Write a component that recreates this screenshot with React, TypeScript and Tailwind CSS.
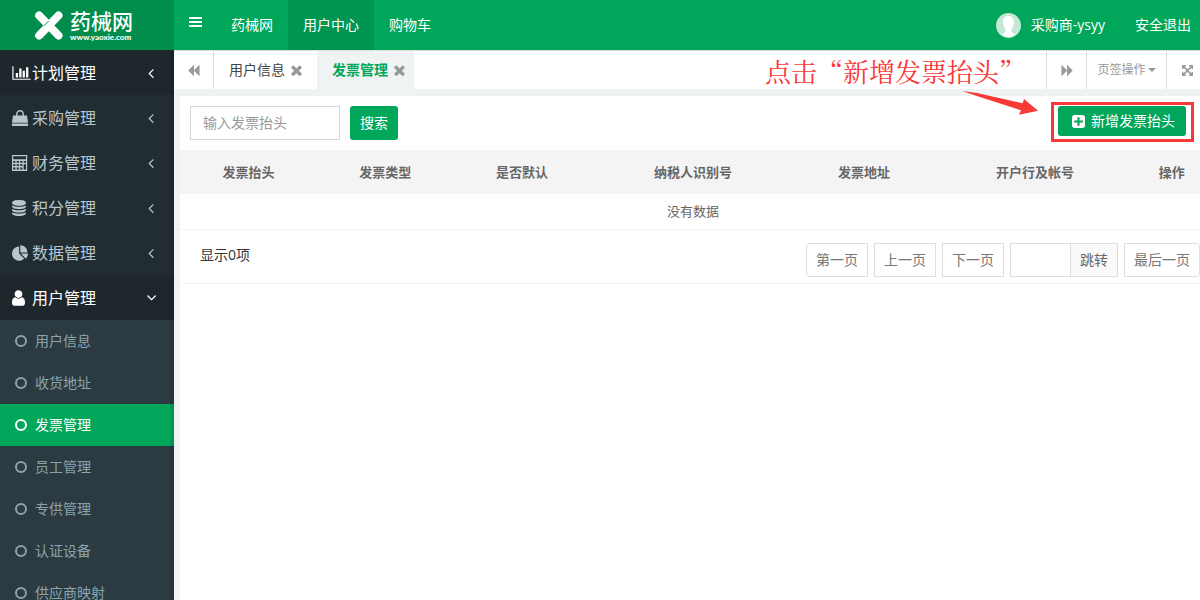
import React from 'react';

type GlyphProps = { d: string; box?: string; className?: string };

function Glyph({ d, box = '0 0 1792 1792', className = 'h-3.5 w-3.5' }: GlyphProps) {
  return (
    <svg viewBox={box} aria-hidden="true" className={`shrink-0 fill-current ${className}`}>
      <path d={d} />
    </svg>
  );
}

const ICONS = {
  backward:
    'M1683 141q19-19 32-13t13 32v1472q0 26-13 32t-32-13l-710-710q-9-9-13-19v710q0 26-13 32t-32-13l-710-710q-19-19-19-45t19-45l710-710q19-19 32-13t13 32v710q4-10 13-19z',
  times:
    'M1490 1322q0 40-28 68l-136 136q-28 28-68 28t-68-28l-294-294-294 294q-28 28-68 28t-68-28l-136-136q-28-28-28-68t28-68l294-294-294-294q-28-28-28-68t28-68l136-136q28-28 68-28t68 28l294 294 294-294q28-28 68-28t68 28l136 136q28 28 28 68t-28 68l-294 294 294 294q28 28 28 68z',
  angle:
    'M1203 544q0 13-10 23l-393 393 393 393q10 10 10 23t-10 23l-50 50q-10 10-23 10t-23-10l-466-466q-10-10-10-23t10-23l466-466q10-10 23-10t23 10l50 50q10 10 10 23z',
  expand:
    'M1411 541l-355 355 355 355 144-144q29-31 70-14 39 17 39 59v448q0 26-19 45t-45 19h-448q-42 0-59-40-17-39 14-69l144-144-355-355-355 355 144 144q31 30 14 69-17 40-59 40h-448q-26 0-45-19t-19-45v-448q0-42 40-59 39-17 69 14l144 144 355-355-355-355-144 144q-19 19-45 19-12 0-24-5-40-17-40-59v-448q0-26 19-45t45-19h448q42 0 59 40 17 39-14 69l-144 144 355 355 355-355-144-144q-31-30-14-69 17-40 59-40h448q26 0 45 19t19 45v448q0 42-39 59-13 5-25 5-26 0-45-19z',
  plusSquare:
    'M1408 960v-128q0-26-19-45t-45-19h-320v-320q0-26-19-45t-45-19h-128q-26 0-45 19t-19 45v320h-320q-26 0-45 19t-19 45v128q0 26 19 45t45 19h320v320q0 26 19 45t45 19h128q26 0 45-19t19-45v-320h320q26 0 45-19t19-45zm256-544v960q0 119-84.5 203.5t-203.5 84.5h-960q-119 0-203.5-84.5t-84.5-203.5v-960q0-119 84.5-203.5t203.5-84.5h960q119 0 203.5 84.5t84.5 203.5z',
  chart:
    'M640 896v512h-256v-512h256zm384-512v1024h-256v-1024h256zm1024 1152v128h-2048v-1536h128v1408h1920zm-640-896v768h-256v-768h256zm384-384v1152h-256v-1152h256z',
  database:
    'M896 768q237 0 443-43t325-127v170q0 69-103 128t-280 93.5-385 34.5-385-34.5-280-93.5-103-128v-170q119 84 325 127t443 43zm0 768q237 0 443-43t325-127v170q0 69-103 128t-280 93.5-385 34.5-385-34.5-280-93.5-103-128v-170q119 84 325 127t443 43zm0-384q237 0 443-43t325-127v170q0 69-103 128t-280 93.5-385 34.5-385-34.5-280-93.5-103-128v-170q119 84 325 127t443 43zm0-1152q208 0 385 34.5t280 93.5 103 128v128q0 69-103 128t-280 93.5-385 34.5-385-34.5-280-93.5-103-128v-128q0-69 103-128t280-93.5 385-34.5z',
  pie: 'M768 890l546 546q-106 108-247.5 168t-298.5 60q-209 0-385.5-103t-279.5-279.5-103-385.5 103-385.5 279.5-279.5 385.5-103v762zm187 6h773q0 157-60 298.5t-168 247.5zm709-128h-768v-768q209 0 385.5 103t279.5 279.5 103 385.5z',
  user: 'M1536 1399q0 109-62.5 187t-150.5 78h-854q-88 0-150.5-78t-62.5-187q0-85 8.5-160.5t31.5-152 58.5-131 94-89 134.5-34.5q131 128 313 128t313-128q76 0 134.5 34.5t94 89 58.5 131 31.5 152 8.5 160.5zm-256-887q0 159-112.5 271.5t-271.5 112.5-271.5-112.5-112.5-271.5 112.5-271.5 271.5-112.5 271.5 112.5 112.5 271.5z',
};

function BagIcon() {
  return (
    <svg viewBox="0 0 16 16" aria-hidden="true" className="h-4 w-4 shrink-0">
      <path d="M4.8 7.5V4a3.2 3.2 0 0 1 6.4 0v3.5" fill="none" stroke="currentColor" strokeWidth="1.4" />
      <path d="M1 5.5h14l1 7.3H0zM0 13.5h16V16H0z" fill="currentColor" />
    </svg>
  );
}

function CalculatorIcon() {
  return (
    <svg viewBox="0 0 16 16" aria-hidden="true" className="h-4 w-4 shrink-0 fill-current">
      <path
        fillRule="evenodd"
        d="M0 0h15.2v16H0zM1.2 1.2v3h12.8v-3zM1.2 6v1.8h2.2V6zm3.5 0v1.8h2.2V6zm3.5 0v1.8h2.2V6zm3.5 0v1.8H14V6zM1.2 9.2V11h2.2V9.2zm3.5 0V11h2.2V9.2zm3.5 0V11h2.2V9.2zM1.2 12.5v2h2.2v-2zm3.5 0v2h2.2v-2zm3.5 0v2h2.2v-2zm3.5-3.3v5.3H14V9.2z"
      />
    </svg>
  );
}

const MENU = [
  { name: '计划管理', icon: <Glyph d={ICONS.chart} box="0 0 2048 1792" className="h-4 w-[19px]" />, active: true },
  { name: '采购管理', icon: <BagIcon /> },
  { name: '财务管理', icon: <CalculatorIcon /> },
  { name: '积分管理', icon: <Glyph d={ICONS.database} box="128 0 1536 1792" className="h-4 w-3.5" /> },
  { name: '数据管理', icon: <Glyph d={ICONS.pie} box="0 0 1728 1664" className="h-4 w-4" /> },
  { name: '用户管理', icon: <Glyph d={ICONS.user} box="256 128 1280 1536" className="h-4 w-[13px]" />, active: true, open: true },
];

const SUB_MENU = ['用户信息', '收货地址', '发票管理', '员工管理', '专供管理', '认证设备', '供应商映射'];

const COLUMNS = [
  { title: '发票抬头', width: 'w-2/15' },
  { title: '发票类型', width: 'w-2/15' },
  { title: '是否默认', width: 'w-2/15' },
  { title: '纳税人识别号', width: 'w-3/15' },
  { title: '发票地址', width: 'w-2/15' },
  { title: '开户行及帐号', width: 'w-3/15' },
  { title: '操作', width: 'w-1/15' },
];

const pageButton = 'h-[34px] border border-[#ddd] bg-white px-[9px] text-sm text-[#777]';

function Sidebar() {
  return (
    <aside className="relative flex w-[174px] shrink-0 flex-col bg-[#222d32]">
      <a href="#home" className="flex h-[50px] shrink-0 items-center gap-[7px] bg-[#008d4c] pl-[35px] text-white">
        <svg viewBox="0 0 28 29" aria-hidden="true" className="h-[29px] w-7 shrink-0">
          <g stroke="#fff" strokeLinecap="round" strokeWidth="8">
            <path d="M4.2 4.5L23.5 24.5" />
            <path d="M23.5 4.5L4.2 24.5" />
          </g>
          <path d="M9 14.8L14 9.8" stroke="#008d4c" strokeWidth="0.9" />
        </svg>
        <span className="flex flex-col">
          <span className="text-[21px] leading-6 font-medium">药械网</span>
          <span className="font-[Lato] text-[8px] leading-2 font-black">www.yaoxie.com</span>
        </span>
      </a>

      <nav>
        {MENU.map((item) => (
          <a
            key={item.name}
            href="#menu"
            className={`flex h-[45px] items-center pr-[15px] pl-3 text-base ${
              item.active ? 'bg-[#1e282c] text-white' : 'text-[#b8c7ce]'
            }`}
          >
            <span className="flex w-5 items-center">{item.icon}</span>
            <span className="flex-1">{item.name}</span>
            <Glyph d={ICONS.angle} className={item.open ? 'h-4 w-4 -rotate-90' : 'h-4 w-4'} />
          </a>
        ))}
        <div className="bg-[#2c3b41]">
          {SUB_MENU.map((name) => (
            <a
              key={name}
              href="#submenu"
              className={`flex h-[42px] items-center gap-2 pl-[15px] text-sm ${
                name === '发票管理' ? 'bg-[#00a65a] text-white' : 'text-[#8aa4af]'
              }`}
            >
              <svg viewBox="0 0 12 12" aria-hidden="true" className="h-3 w-3 shrink-0">
                <circle cx="6" cy="6" r="5" fill="none" stroke="currentColor" strokeWidth="2" />
              </svg>
              {name}
            </a>
          ))}
        </div>
      </nav>
      {/* inner shade along the right edge, below the logo */}
      <div aria-hidden="true" className="absolute top-[50px] right-0 bottom-0 w-1 bg-black/10" />
    </aside>
  );
}

function TopBar() {
  return (
    <header className="flex h-[50px] shrink-0 items-center bg-[#00a65a] text-sm text-white">
      <button type="button" aria-label="切换菜单" className="flex h-full w-[42px] items-center pb-1.5 pl-[15px]">
        <svg viewBox="0 0 13 10" aria-hidden="true" className="h-2.5 w-[13px] fill-current">
          <path d="M0 0h13v2H0zM0 4h13v2H0zM0 8h13v2H0z" />
        </svg>
      </button>
      <nav className="flex h-full">
        <a href="#mall" className="flex items-center px-[15px]">药械网</a>
        <a href="#center" className="flex items-center bg-[#009551] px-[15px]">用户中心</a>
        <a href="#cart" className="flex items-center px-[15px]">购物车</a>
      </nav>
      <a href="#profile" className="ml-auto flex items-center gap-2.5">
        <svg viewBox="0 0 25 25" aria-hidden="true" className="h-[25px] w-[25px]">
          <circle cx="12.5" cy="12.5" r="12.5" fill="#c5e8d6" />
          <path
            d="M12.5 3c3.4 0 5.5 2.5 5.5 6 0 3-1 5.3-2.5 6.7v2.5c0 1.2 1.2 2 4 3.2a12.5 12.5 0 0 1-14 0c2.8-1.2 4-2 4-3.2v-2.5C8 14.300 7 12 7 9c0-3.500 2.100-6 5.500-6z"
            fill="#fff"
          />
        </svg>
        采购商-ysyy
      </a>
      <a href="#logout" className="mr-[9px] ml-[30px]">安全退出</a>
    </header>
  );
}

function TabBar() {
  return (
    <div className="relative flex h-[39px] shrink-0 border-t border-[#ddd] bg-white text-[#999]">
      <button type="button" aria-label="向左" className="flex w-10 items-center justify-center border-r border-[#ddd]">
        <Glyph d={ICONS.backward} className="h-[13px] w-[13px]" />
      </button>
      <div className="mr-1.5 flex items-center gap-1.5 pr-[9px] pl-[15px] text-sm">
        <a href="#info" className="text-[#444]">用户信息</a>
        <button type="button" aria-label="关闭用户信息">
          <Glyph d={ICONS.times} box="302 302 1188 1252" className="h-[11px] w-[11px]" />
        </button>
      </div>
      <div className="flex items-center gap-1.5 bg-[#eff3f4] pr-[9px] pl-[15px] text-sm">
        <a href="#invoice" className="font-bold text-[#00a65a]">发票管理</a>
        <button type="button" aria-label="关闭发票管理">
          <Glyph d={ICONS.times} box="302 302 1188 1252" className="h-[11px] w-[11px]" />
        </button>
      </div>
      <button type="button" aria-label="向右" className="ml-auto flex w-[41px] items-center justify-center border-x border-[#ddd] pl-0.5">
        <Glyph d={ICONS.backward} className="h-[13px] w-[13px] rotate-180" />
      </button>
      <button type="button" className="flex w-20 items-center justify-center border-r border-[#ddd] text-xs">
        页签操作
        <svg viewBox="0 0 8 4" aria-hidden="true" className="ml-0.5 h-1 w-2 fill-current">
          <path d="M0 0h8L4 4z" />
        </svg>
      </button>
      <button type="button" aria-label="全屏" className="flex w-[33px] items-center pl-[15px]">
        <Glyph d={ICONS.expand} box="128 128 1536 1536" className="h-[11px] w-[11px]" />
      </button>

      {/* hint pointing at the add button */}
      <p className="absolute top-0.5 right-[175px] font-['Noto_Serif_CJK_SC','Noto_Sans_CJK_SC',serif] text-[26px] leading-9 whitespace-nowrap text-[#f93838]">
        点击“新增发票抬头”
      </p>
      <svg viewBox="0 0 78 26" aria-hidden="true" className="absolute top-10 right-[161px] h-[26px] w-[78px]">
        <path d="M1 0L16 2 61.7 12.3 63 8 77 19.7 58 23.7 60 19.3 22 7z" fill="#f93838" />
      </svg>
    </div>
  );
}

export default function App() {
  return (
    <div
      lang="zh-CN"
      className="flex h-screen overflow-hidden bg-[#eff3f4] font-['Open_Sans','Noto_Sans_CJK_SC',sans-serif] text-sm text-[#333]"
    >
      <Sidebar />
      <div className="flex min-w-0 flex-1 flex-col">
        <TopBar />
        <TabBar />
        <main className="mt-[7px] ml-1.5 flex-1 bg-white">
          <div className="flex items-start pt-2.5 pr-3.5 pb-2.5 pl-2.5">
            <form className="flex gap-2.5">
              <input
                type="text"
                aria-label="发票抬头"
                placeholder="输入发票抬头"
                className="h-[34px] w-[150px] border border-[#d2d6de] px-3 pb-0.5 text-sm placeholder:text-[#999]"
              />
              <button type="button" className="h-[34px] w-12 rounded-[3px] bg-[#00a65a] text-sm text-white">
                搜索
              </button>
            </form>
            <div className="relative ml-auto">
              <button
                type="button"
                className="flex h-[30px] w-32 items-center justify-end gap-1.5 rounded-[3px] bg-[#00a65a] pr-[11px] text-sm text-white"
              >
                <Glyph d={ICONS.plusSquare} box="128 128 1536 1536" className="h-[13px] w-[13px]" />
                新增发票抬头
              </button>
              <div aria-hidden="true" className="absolute -top-1 -right-2 -bottom-1.5 -left-[7px] border-3 border-[#f93838]" />
            </div>
          </div>

          {/* the grid runs slightly past the right edge of the panel */}
          <div className="-mr-1.5">
            <table className="w-full table-fixed text-center text-[13px] text-[#666]">
              <thead>
                <tr className="h-11 bg-[#f4f4f4]">
                  {COLUMNS.map((col) => (
                    <th key={col.title} className={`${col.width} font-bold`}>
                      {col.title}
                    </th>
                  ))}
                </tr>
              </thead>
              <tbody>
                <tr className="h-[35px] border-b border-[#f4f4f4]">
                  <td colSpan={7}>没有数据</td>
                </tr>
              </tbody>
            </table>
          </div>

          <div className="flex h-[54px] items-center border-b border-[#f4f4f4] pl-5">
            <span className="pb-0.5">显示0项</span>
            <div className="ml-auto flex gap-1.5 pt-2">
              <button type="button" className={`${pageButton} rounded-l-[3px]`}>第一页</button>
              <button type="button" className={pageButton}>上一页</button>
              <button type="button" className={pageButton}>下一页</button>
              <div className="flex">
                <input type="text" aria-label="页码" className="h-[34px] w-[60px] border border-r-0 border-[#ddd] px-2" />
                <button type="button" className="h-[34px] border border-[#ddd] bg-[#fafafa] px-[9px] text-sm text-[#666]">
                  跳转
                </button>
              </div>
              <button type="button" className={`${pageButton} rounded-r-[3px]`}>最后一页</button>
            </div>
          </div>
        </main>
      </div>
    </div>
  );
}
